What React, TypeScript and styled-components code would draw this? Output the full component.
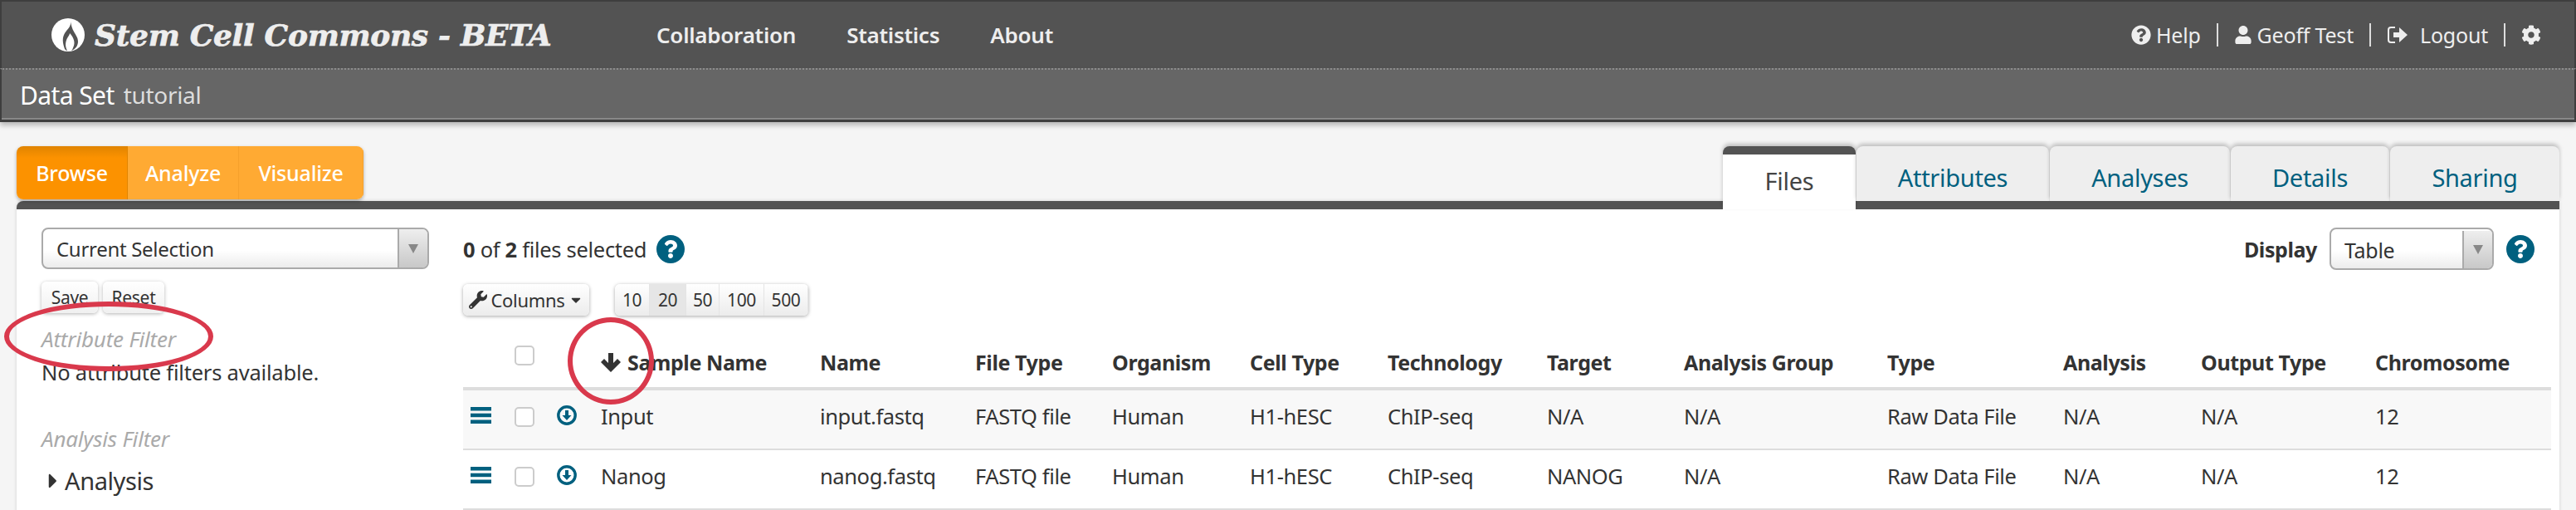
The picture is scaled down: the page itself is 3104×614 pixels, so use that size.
import * as React from "react";
import styled, { createGlobalStyle } from "styled-components";
import {
  FaCaretDown,
  FaCaretRight,
  FaCog,
  FaQuestion,
  FaQuestionCircle,
  FaUser,
  FaWrench,
} from "react-icons/fa";

const TEAL = "#00607f";
const COLUMNS = "62px 51px 53px 264px 187px 165px 166px 166px 192px 165px 245px 212px 166px 210px 1fr";

const GlobalStyle = createGlobalStyle`
  html, body {
    margin: 0;
    padding: 0;
    background: #f5f5f5;
  }
  * {
    box-sizing: border-box;
  }
`;

const Page = styled.div`
  position: relative;
  width: 3104px;
  height: 614px;
  overflow: hidden;
  font-family: "Noto Sans", sans-serif;
  font-size: 25px;
  color: #333;
  background: #f5f5f5;
`;

const Navbar = styled.header`
  height: 82px;
  display: flex;
  align-items: center;
  justify-content: space-between;
  padding: 0 40px 0 60px;
  background: #535353;
  border: 2px solid #3e3e3e;
  border-bottom: none;
`;

const NavLeft = styled.div`
  display: flex;
  align-items: center;
`;

const Brand = styled.div`
  display: flex;
  align-items: center;
  gap: 12px;
  width: 729px;
  font-family: "DejaVu Serif", serif;
  font-size: 36px;
  font-weight: 700;
  font-style: italic;
  letter-spacing: -0.3px;
  -webkit-text-stroke: 0.7px #eee;
  color: #eee;
  white-space: nowrap;
`;

const NavLink = styled.a`
  margin-right: 61px;
  font-size: 26px;
  font-weight: 600;
  letter-spacing: -0.25px;
  color: #eee;
`;

const NavRight = styled.div`
  display: flex;
  align-items: center;
  font-size: 25px;
  letter-spacing: -0.2px;
  color: #eee;
`;

const NavItem = styled.span<{ $gap?: number }>`
  display: flex;
  align-items: center;
  gap: ${p => p.$gap ?? 6}px;
`;

const NavSeparator = styled.span`
  width: 2px;
  height: 28px;
  margin: 0 19px;
  background: #ddd;
`;

const SubBar = styled.div`
  height: 65px;
  display: flex;
  align-items: center;
  gap: 11px;
  padding-left: 22px;
  background: #666;
  border-top: 2px dotted #8c8c8c;
  border-left: 2px solid #3e3e3e;
  border-right: 2px solid #3e3e3e;
  border-bottom: 3px solid #3e3e3e;
  box-shadow: 0 4px 6px rgba(0, 0, 0, 0.25), inset 0 -2px 0 #888;
`;

const SubTitle = styled.span`
  font-size: 30px;
  letter-spacing: -0.6px;
  color: #fff;
`;

const SubName = styled.span`
  font-size: 28px;
  letter-spacing: -0.3px;
  color: #ddd;
`;

const Main = styled.main`
  padding: 29px 20px 0;
`;

const TabRow = styled.div`
  display: flex;
  align-items: flex-end;
  justify-content: space-between;
  height: 66px;
`;

const ModeTabs = styled.div`
  display: flex;
  height: 64px;
  margin-bottom: 2px;
  border-radius: 8px;
  box-shadow: 0 2px 4px rgba(0, 0, 0, 0.3);
  overflow: hidden;
`;

const ModeTab = styled.div<{ $active?: boolean; $width: number }>`
  width: ${p => p.$width}px;
  display: flex;
  align-items: center;
  justify-content: center;
  font-size: 25px;
  font-weight: 500;
  letter-spacing: -0.2px;
  color: #fff;
  background: ${p => (p.$active ? "linear-gradient(#e08400, #fc9200 22%)" : "#ffaa33")};
  border-right: 1px solid ${p => (p.$active ? "#e08400" : "#f5a02c")};
`;

const DataTabs = styled.div`
  position: relative;
  z-index: 1;
  display: flex;
  align-items: flex-start;
  gap: 1px;
  align-self: flex-start;
`;

const DataTab = styled.div<{ $active?: boolean; $width: number }>`
  width: ${p => p.$width}px;
  height: ${p => (p.$active ? 76 : 66)}px;
  display: flex;
  align-items: center;
  justify-content: center;
  padding-bottom: ${p => (p.$active ? 4 : 0)}px;
  padding-top: ${p => (p.$active ? 0 : 8)}px;
  font-size: 29px;
  letter-spacing: -0.3px;
  border-radius: 8px 8px 0 0;
  color: ${p => (p.$active ? "#444" : TEAL)};
  background: ${p => (p.$active ? "#fff" : "#eee")};
  border-top: ${p => (p.$active ? "10px solid #535353" : "none")};
  box-shadow: 0 -3px 5px rgba(0, 0, 0, 0.22);
`;

const Panel = styled.section`
  height: 400px;
  display: grid;
  grid-template-columns: 538px 2516px;
  background: #fff;
  border-top: 10px solid #535353;
  border-radius: 8px 0 0 0;
  box-shadow: 0 0 4px rgba(0, 0, 0, 0.15);
`;

const Sidebar = styled.aside`
  display: flex;
  flex-direction: column;
  align-items: flex-start;
  padding: 22px 0 0 30px;
`;

const SelectBox = styled.div<{ $width: number; $height: number }>`
  width: ${p => p.$width}px;
  height: ${p => p.$height}px;
  display: flex;
  align-items: center;
  justify-content: space-between;
  padding-left: 16px;
  font-size: 24px;
  letter-spacing: -0.3px;
  border: 2px solid #aaa;
  border-radius: 8px;
  background: linear-gradient(#fff 55%, #ececec);
  overflow: hidden;
`;

const SelectArrow = styled.span`
  width: 36px;
  height: 100%;
  display: flex;
  align-items: center;
  justify-content: center;
  border-left: 2px solid #aaa;
  background: linear-gradient(#eee, #c8c8c8);

  &::after {
    content: "";
    border-left: 6px solid transparent;
    border-right: 6px solid transparent;
    border-top: 11px solid #888;
  }
`;

const ButtonRow = styled.div`
  display: flex;
  gap: 6px;
  margin-top: 15px;
`;

const SmallButton = styled.div<{ $width: number }>`
  width: ${p => p.$width}px;
  height: 38px;
  display: flex;
  align-items: center;
  justify-content: center;
  font-size: 21px;
  letter-spacing: -0.3px;
  border-radius: 6px;
  background: linear-gradient(#fff, #f0f0f0);
  box-shadow: 0 1px 4px rgba(0, 0, 0, 0.3);
`;

const FilterTitle = styled.div<{ $top: number }>`
  margin-top: ${p => p.$top}px;
  font-size: 26px;
  font-style: italic;
  line-height: 32px;
  letter-spacing: -0.2px;
  color: #aaa;
`;

const FilterEmpty = styled.div`
  margin-top: 8px;
  font-size: 25.5px;
  line-height: 32px;
  letter-spacing: -0.2px;
`;

const FilterGroup = styled.div`
  display: flex;
  align-items: center;
  margin-top: 14px;
  font-size: 29px;
  line-height: 42px;
  letter-spacing: -0.4px;
`;

const Content = styled.div`
  display: flex;
  flex-direction: column;
  padding-top: 22px;
`;

const ContentTop = styled.div`
  height: 51px;
  display: flex;
  align-items: center;
  justify-content: space-between;
  padding-right: 20px;
`;

const Selected = styled.div`
  display: flex;
  align-items: center;
  gap: 12px;
  font-size: 25.5px;
  letter-spacing: -0.3px;

  b {
    font-weight: 700;
  }
`;

const DisplayGroup = styled.div`
  display: flex;
  align-items: center;
  gap: 15px;
  font-size: 25px;
  font-weight: 700;
  letter-spacing: -0.4px;
`;

const DisplaySelect = styled(SelectBox)`
  font-weight: 400;
  font-size: 25px;
  padding-top: 2px;
`;

const HelpBadge = styled.span`
  width: 34px;
  height: 34px;
  display: flex;
  align-items: center;
  justify-content: center;
  font-size: 22px;
  color: #fff;
  border-radius: 50%;
  background: ${TEAL};
`;

const Toolbar = styled.div`
  display: flex;
  gap: 31px;
  margin-top: 17px;
`;

const ColumnsButton = styled.div`
  width: 152px;
  height: 38px;
  display: flex;
  align-items: center;
  justify-content: center;
  gap: 4px;
  font-size: 22px;
  letter-spacing: -0.3px;
  border-radius: 6px;
  background: linear-gradient(#fff, #ececec);
  box-shadow: 0 1px 4px rgba(0, 0, 0, 0.35);
`;

const PageGroup = styled.div`
  display: flex;
  height: 38px;
  border-radius: 6px;
  overflow: hidden;
  box-shadow: 0 1px 4px rgba(0, 0, 0, 0.35);
`;

const PageButton = styled.div<{ $active?: boolean; $width: number }>`
  width: ${p => p.$width}px;
  display: flex;
  align-items: center;
  justify-content: center;
  font-size: 21px;
  letter-spacing: -0.4px;
  background: ${p => (p.$active ? "#e6e6e6" : "linear-gradient(#fff, #ececec)")};
  border-right: 1px solid #e4e4e4;
`;

const TableHead = styled.div`
  display: grid;
  grid-template-columns: ${COLUMNS};
  align-items: start;
  height: 90px;
  padding-top: 39px;
  font-size: 25px;
  font-weight: 700;
  line-height: 34px;
  letter-spacing: -0.4px;
  border-bottom: 4px solid #ddd;
  white-space: nowrap;
`;

const TableRow = styled.div<{ $striped?: boolean }>`
  display: grid;
  grid-template-columns: ${COLUMNS};
  align-items: start;
  height: 72px;
  padding-top: 14px;
  font-size: 25.5px;
  line-height: 34px;
  letter-spacing: -0.4px;
  background: ${p => (p.$striped ? "#f8f8f8" : "#fff")};
  border-bottom: 2px solid #ddd;
  white-space: nowrap;
`;

const SortHeader = styled.span`
  display: flex;
  align-items: center;
  gap: 8px;
`;

const Handle = styled.span`
  display: flex;
  padding: 6px 0 0 9px;
`;

const CheckCell = styled.span<{ $head?: boolean }>`
  display: flex;
  margin-top: ${p => (p.$head ? -3 : 6)}px;
`;

const CheckBox = styled.span`
  width: 24px;
  height: 24px;
  background: #fff;
  border: 2px solid #ccc;
  border-radius: 5px;
`;

const DownloadCell = styled.span`
  display: flex;
  padding-top: 4px;
`;

const RedRing = styled.span<{ $left: number; $top: number; $w: number; $h: number }>`
  position: absolute;
  z-index: 2;
  left: ${p => p.$left}px;
  top: ${p => p.$top}px;
  width: ${p => p.$w}px;
  height: ${p => p.$h}px;
  border: 6px solid #d9394c;
  border-radius: 50%;
`;

const LogoMark = () => (
  <svg width="40" height="40" viewBox="0 0 40 40">
    <circle cx="20" cy="20" r="20" fill="#fff" />
    <path
      d="M23 4c1 6-4 9-7 14-3 5-3 11 0 19 1 1 2 2 3 2-3-6-2-11 0-15 1-2 3-4 3-6 3 3 7 9 5 15-1 2-1 4-3 6 5-2 8-6 8-11 0-5-3-8-5-12-2-3-3-7-4-12z"
      fill="#535353"
    />
    <path d="M20 25c-2 4-2 9 0 13h2c-2-4-2-9-2-13z" fill="#fff" />
  </svg>
);

const LogoutIcon = () => (
  <svg width="26" height="24" viewBox="0 0 26 24">
    <path d="M10 3H5a3 3 0 0 0-3 3v12a3 3 0 0 0 3 3h5" fill="none" stroke="#eee" strokeWidth="2" />
    <path d="M8 9h7V3l10 9-10 9v-6H8z" fill="#eee" />
  </svg>
);

const SortArrow = () => (
  <svg width="24" height="24" viewBox="0 0 24 24">
    <path d="M9 1h6v12l5-5 4 4-12 12L0 12l4-4 5 5z" fill="#333" />
  </svg>
);

const HandleIcon = () => (
  <svg width="25" height="20" viewBox="0 0 25 20">
    <rect width="25" height="4.5" fill={TEAL} />
    <rect y="7.7" width="25" height="4.5" fill={TEAL} />
    <rect y="15.5" width="25" height="4.5" fill={TEAL} />
  </svg>
);

const DownloadIcon = () => (
  <svg width="24" height="24" viewBox="0 0 24 24">
    <circle cx="12" cy="12" r="10.2" fill="none" stroke={TEAL} strokeWidth="3.4" />
    <path d="M10 6h4v6h3.5L12 18l-5.500-6H10z" fill={TEAL} />
  </svg>
);

const dataRows = [
  { sample: "Input", name: "input.fastq", target: "N/A" },
  { sample: "Nanog", name: "nanog.fastq", target: "NANOG" },
];

const headers = [
  "Name", "File Type", "Organism", "Cell Type", "Technology", "Target",
  "Analysis Group", "Type", "Analysis", "Output Type", "Chromosome",
];

const dataTabs = [
  { label: "Files", width: 160, active: true },
  { label: "Attributes", width: 232 },
  { label: "Analyses", width: 217 },
  { label: "Details", width: 191 },
  { label: "Sharing", width: 204 },
];

const pages = [
  { label: "10", width: 42 },
  { label: "20", width: 44, active: true },
  { label: "50", width: 40 },
  { label: "100", width: 54 },
  { label: "500", width: 53 },
];

export default function App() {
  return (
    <Page>
      <GlobalStyle />
      <Navbar>
        <NavLeft>
          <Brand>
            <LogoMark />
            Stem Cell Commons - BETA
          </Brand>
          <NavLink>Collaboration</NavLink>
          <NavLink>Statistics</NavLink>
          <NavLink>About</NavLink>
        </NavLeft>
        <NavRight>
          <NavItem><FaQuestionCircle size={24} />Help</NavItem>
          <NavSeparator />
          <NavItem><FaUser size={22} />Geoff Test</NavItem>
          <NavSeparator />
          <NavItem $gap={14}><LogoutIcon />Logout</NavItem>
          <NavSeparator />
          <NavItem><FaCog size={24} /></NavItem>
        </NavRight>
      </Navbar>
      <SubBar>
        <SubTitle>Data Set</SubTitle>
        <SubName>tutorial</SubName>
      </SubBar>
      <Main>
        <TabRow>
          <ModeTabs>
            <ModeTab $active $width={134}>Browse</ModeTab>
            <ModeTab $width={134}>Analyze</ModeTab>
            <ModeTab $width={150}>Visualize</ModeTab>
          </ModeTabs>
          <DataTabs>
            {dataTabs.map(t => (
              <DataTab key={t.label} $active={t.active} $width={t.width}>{t.label}</DataTab>
            ))}
          </DataTabs>
        </TabRow>
        <Panel>
          <Sidebar>
            <SelectBox $width={467} $height={50}>
              Current Selection
              <SelectArrow />
            </SelectBox>
            <ButtonRow>
              <SmallButton $width={68}>Save</SmallButton>
              <SmallButton $width={74}>Reset</SmallButton>
            </ButtonRow>
            <FilterTitle $top={15}>Attribute Filter</FilterTitle>
            <FilterEmpty>No attribute filters available.</FilterEmpty>
            <FilterTitle $top={48}>Analysis Filter</FilterTitle>
            <FilterGroup><FaCaretRight size={28} color="#333" />Analysis</FilterGroup>
          </Sidebar>
          <Content>
            <ContentTop>
              <Selected>
                <span><b>0</b> of <b>2</b> files selected</span>
                <HelpBadge><FaQuestion /></HelpBadge>
              </Selected>
              <DisplayGroup>
                Display
                <DisplaySelect $width={198} $height={51}>
                  Table
                  <SelectArrow />
                </DisplaySelect>
                <HelpBadge><FaQuestion /></HelpBadge>
              </DisplayGroup>
            </ContentTop>
            <Toolbar>
              <ColumnsButton>
                <FaWrench size={22} />
                Columns
                <FaCaretDown size={18} />
              </ColumnsButton>
              <PageGroup>
                {pages.map(p => (
                  <PageButton key={p.label} $active={p.active} $width={p.width}>{p.label}</PageButton>
                ))}
              </PageGroup>
            </Toolbar>
            <TableHead>
              <span />
              <CheckCell $head><CheckBox /></CheckCell>
              <span />
              <SortHeader><SortArrow />Sample Name</SortHeader>
              {headers.map(h => <span key={h}>{h}</span>)}
            </TableHead>
            {dataRows.map((r, i) => (
              <TableRow key={r.sample} $striped={i === 0}>
                <Handle><HandleIcon /></Handle>
                <CheckCell><CheckBox /></CheckCell>
                <DownloadCell><DownloadIcon /></DownloadCell>
                <span>{r.sample}</span>
                <span>{r.name}</span>
                <span>FASTQ file</span>
                <span>Human</span>
                <span>H1-hESC</span>
                <span>ChIP-seq</span>
                <span>{r.target}</span>
                <span>N/A</span>
                <span>Raw Data File</span>
                <span>N/A</span>
                <span>N/A</span>
                <span>12</span>
              </TableRow>
            ))}
          </Content>
        </Panel>
      </Main>
      <RedRing $left={5} $top={363} $w={252} $h={84} />
      <RedRing $left={684} $top={382} $w={104} $h={105} />
    </Page>
  );
}
